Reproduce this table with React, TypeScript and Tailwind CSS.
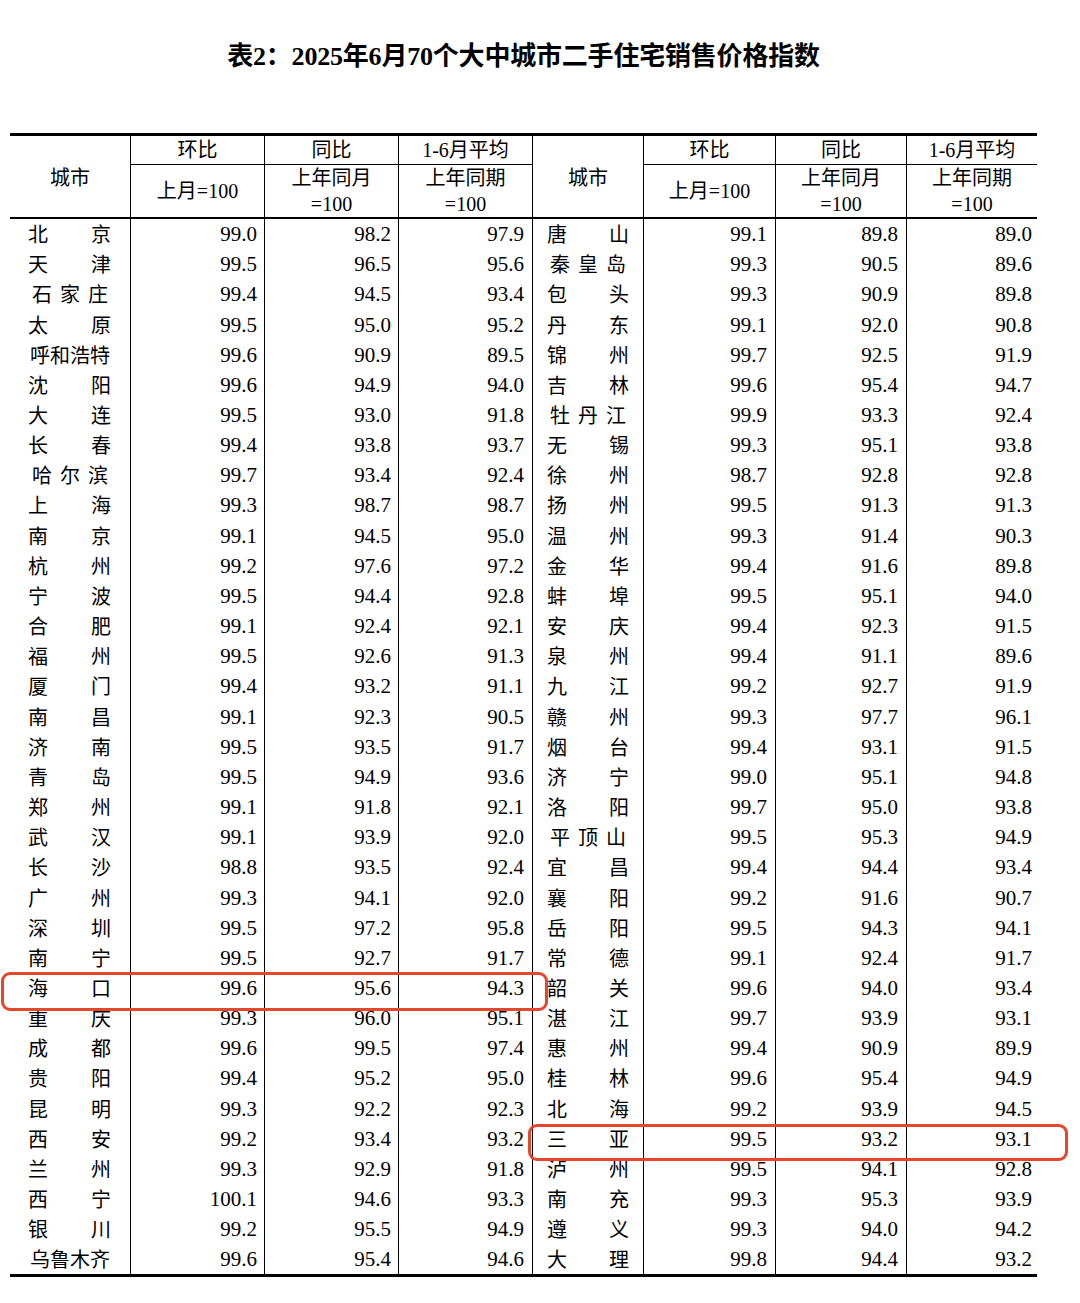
import React from "react";

type Row = [string, string, string, string];

const left: Row[] = [
  ["北京", "99.0", "98.2", "97.9"],
  ["天津", "99.5", "96.5", "95.6"],
  ["石家庄", "99.4", "94.5", "93.4"],
  ["太原", "99.5", "95.0", "95.2"],
  ["呼和浩特", "99.6", "90.9", "89.5"],
  ["沈阳", "99.6", "94.9", "94.0"],
  ["大连", "99.5", "93.0", "91.8"],
  ["长春", "99.4", "93.8", "93.7"],
  ["哈尔滨", "99.7", "93.4", "92.4"],
  ["上海", "99.3", "98.7", "98.7"],
  ["南京", "99.1", "94.5", "95.0"],
  ["杭州", "99.2", "97.6", "97.2"],
  ["宁波", "99.5", "94.4", "92.8"],
  ["合肥", "99.1", "92.4", "92.1"],
  ["福州", "99.5", "92.6", "91.3"],
  ["厦门", "99.4", "93.2", "91.1"],
  ["南昌", "99.1", "92.3", "90.5"],
  ["济南", "99.5", "93.5", "91.7"],
  ["青岛", "99.5", "94.9", "93.6"],
  ["郑州", "99.1", "91.8", "92.1"],
  ["武汉", "99.1", "93.9", "92.0"],
  ["长沙", "98.8", "93.5", "92.4"],
  ["广州", "99.3", "94.1", "92.0"],
  ["深圳", "99.5", "97.2", "95.8"],
  ["南宁", "99.5", "92.7", "91.7"],
  ["海口", "99.6", "95.6", "94.3"],
  ["重庆", "99.3", "96.0", "95.1"],
  ["成都", "99.6", "99.5", "97.4"],
  ["贵阳", "99.4", "95.2", "95.0"],
  ["昆明", "99.3", "92.2", "92.3"],
  ["西安", "99.2", "93.4", "93.2"],
  ["兰州", "99.3", "92.9", "91.8"],
  ["西宁", "100.1", "94.6", "93.3"],
  ["银川", "99.2", "95.5", "94.9"],
  ["乌鲁木齐", "99.6", "95.4", "94.6"],
];

const right: Row[] = [
  ["唐山", "99.1", "89.8", "89.0"],
  ["秦皇岛", "99.3", "90.5", "89.6"],
  ["包头", "99.3", "90.9", "89.8"],
  ["丹东", "99.1", "92.0", "90.8"],
  ["锦州", "99.7", "92.5", "91.9"],
  ["吉林", "99.6", "95.4", "94.7"],
  ["牡丹江", "99.9", "93.3", "92.4"],
  ["无锡", "99.3", "95.1", "93.8"],
  ["徐州", "98.7", "92.8", "92.8"],
  ["扬州", "99.5", "91.3", "91.3"],
  ["温州", "99.3", "91.4", "90.3"],
  ["金华", "99.4", "91.6", "89.8"],
  ["蚌埠", "99.5", "95.1", "94.0"],
  ["安庆", "99.4", "92.3", "91.5"],
  ["泉州", "99.4", "91.1", "89.6"],
  ["九江", "99.2", "92.7", "91.9"],
  ["赣州", "99.3", "97.7", "96.1"],
  ["烟台", "99.4", "93.1", "91.5"],
  ["济宁", "99.0", "95.1", "94.8"],
  ["洛阳", "99.7", "95.0", "93.8"],
  ["平顶山", "99.5", "95.3", "94.9"],
  ["宜昌", "99.4", "94.4", "93.4"],
  ["襄阳", "99.2", "91.6", "90.7"],
  ["岳阳", "99.5", "94.3", "94.1"],
  ["常德", "99.1", "92.4", "91.7"],
  ["韶关", "99.6", "94.0", "93.4"],
  ["湛江", "99.7", "93.9", "93.1"],
  ["惠州", "99.4", "90.9", "89.9"],
  ["桂林", "99.6", "95.4", "94.9"],
  ["北海", "99.2", "93.9", "94.5"],
  ["三亚", "99.5", "93.2", "93.1"],
  ["泸州", "99.5", "94.1", "92.8"],
  ["南充", "99.3", "95.3", "93.9"],
  ["遵义", "99.3", "94.0", "94.2"],
  ["大理", "99.8", "94.4", "93.2"],
];

function City({ name, side }: { name: string; side: "l" | "r" }) {
  const w = side === "l" ? "w-[121px]" : "w-[111px]";
  const pad = side === "l" ? "pl-[18px] pr-[19px]" : "pl-[14px] pr-[14px]";
  const chars = name.split("");
  if (chars.length === 2) {
    return (
      <div className={`${w} shrink-0 border-r border-black flex items-center justify-between ${pad} font-['Noto_Sans_CJK_SC',sans-serif] text-[20px] leading-none`}>
        <span>{chars[0]}</span>
        <span>{chars[1]}</span>
      </div>
    );
  }
  if (chars.length === 3) {
    return (
      <div className={`${w} shrink-0 border-r border-black flex items-center justify-center gap-[8px] font-['Noto_Sans_CJK_SC',sans-serif] text-[20px] leading-none`}>
        {chars.map((c, i) => (
          <span key={i}>{c}</span>
        ))}
      </div>
    );
  }
  return (
    <div className={`${w} shrink-0 border-r border-black flex items-center justify-center font-['Noto_Sans_CJK_SC',sans-serif] text-[20px] leading-none`}>
      {name}
    </div>
  );
}

function Num({ v, cls }: { v: string; cls: string }) {
  return (
    <div className={`${cls} shrink-0 flex items-center justify-end pt-[1px] font-['Liberation_Serif',serif] text-[21px] leading-none`}>
      {v}
    </div>
  );
}

function HeadCol({ w, top, bottom, last }: { w: string; top: string; bottom: React.ReactNode; last?: boolean }) {
  return (
    <div className={`${w} shrink-0 flex flex-col ${last ? "" : "border-r border-black"}`}>
      <div className="h-[29px] border-b border-black flex items-center justify-center">{top}</div>
      <div className="flex-1 flex flex-col items-center justify-center leading-[26px]">{bottom}</div>
    </div>
  );
}

export default function App() {
  return (
    <div className="w-[1080px] h-[1303px] bg-white text-black font-['Liberation_Serif','Noto_Sans_CJK_SC',serif] overflow-hidden">
      <div className="ml-[10px] w-[1027px] pt-[40px] h-[133px]">
        <h1 className="text-center text-[26px] leading-[34px] tracking-[-0.2px] font-bold font-['Liberation_Serif','Noto_Sans_CJK_SC',serif]">
          表2：2025年6月70个大中城市二手住宅销售价格指数
        </h1>
      </div>
      <div className="relative ml-[10px] w-[1027px] border-t-[3px] border-b-[3px] border-black">
        {/* header */}
        <div className="flex h-[83px] border-b-2 border-black text-[20px] font-['Liberation_Serif','Noto_Sans_CJK_SC',serif]">
          <div className="w-[121px] shrink-0 border-r border-black flex items-center justify-center font-['Noto_Sans_CJK_SC',sans-serif]">
            城市
          </div>
          <HeadCol w="w-[134px]" top="环比" bottom={<span>上月=100</span>} />
          <HeadCol w="w-[134px]" top="同比" bottom={<><span>上年同月</span><span>=100</span></>} />
          <HeadCol w="w-[134px]" top="1-6月平均" bottom={<><span>上年同期</span><span>=100</span></>} />
          <div className="w-[111px] shrink-0 border-r border-black flex items-center justify-center font-['Noto_Sans_CJK_SC',sans-serif]">
            城市
          </div>
          <HeadCol w="w-[132px]" top="环比" bottom={<span>上月=100</span>} />
          <HeadCol w="w-[131px]" top="同比" bottom={<><span>上年同月</span><span>=100</span></>} />
          <HeadCol w="w-[130px]" top="1-6月平均" bottom={<><span>上年同期</span><span>=100</span></>} last />
        </div>
        {/* body */}
        <div className="flex flex-col">
          {left.map((l, i) => {
            const r = right[i];
            return (
              <div key={i} className="flex h-[30.17px]">
                <City name={l[0]} side="l" />
                <Num v={l[1]} cls="w-[134px] border-r border-black pr-[7px]" />
                <Num v={l[2]} cls="w-[134px] border-r border-black pr-[7px]" />
                <Num v={l[3]} cls="w-[134px] border-r border-black pr-[8px]" />
                <City name={r[0]} side="r" />
                <Num v={r[1]} cls="w-[132px] border-r border-black pr-[8px]" />
                <Num v={r[2]} cls="w-[131px] border-r border-black pr-[8px]" />
                <Num v={r[3]} cls="w-[130px] pr-[5px]" />
              </div>
            );
          })}
        </div>
        {/* highlight boxes */}
        <div className="absolute left-[-9px] top-[836px] w-[547px] h-[39px] border-[3px] border-[#e5472d] rounded-[9px] pointer-events-none" />
        <div className="absolute left-[518px] top-[988px] w-[540px] h-[37px] border-[3px] border-[#e5472d] rounded-[9px] pointer-events-none" />
      </div>
    </div>
  );
}
